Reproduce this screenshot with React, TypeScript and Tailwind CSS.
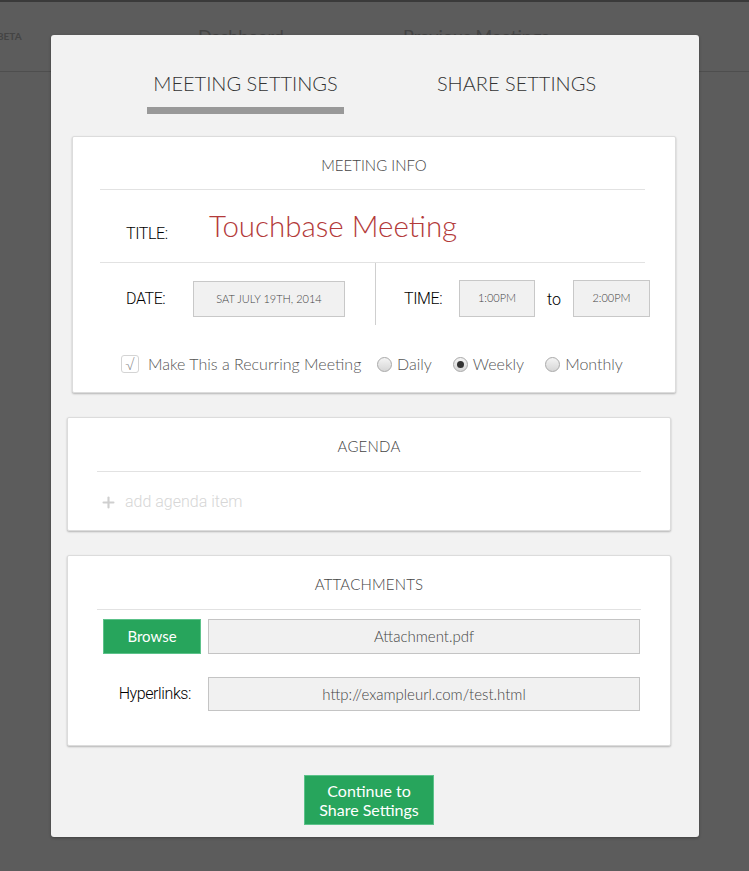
import { Plus } from 'lucide-react';

const lato = "font-['Lato',_'Noto_Sans',_sans-serif]";
const helv = "font-['Roboto',_'Liberation_Sans',_sans-serif]";

function Radio({ label, checked }: { label: string; checked?: boolean }) {
  return (
    <label className="flex items-center gap-[5px]">
      <span className="flex h-[15px] w-[15px] items-center justify-center rounded-full border border-[#a9a9a9] bg-gradient-to-b from-[#f4f4f4] to-[#d6d6d6]">
        {checked && <span className="h-[7px] w-[7px] rounded-full bg-[#333]" />}
      </span>
      <span>{label}</span>
    </label>
  );
}

function CardHeading({ title }: { title: string }) {
  return (
    <div className="flex h-[53px] items-center justify-center pt-[3px] text-[15px] font-light tracking-[0.2px] text-[#444]">
      {title}
    </div>
  );
}

export default function App() {
  return (
    <div className={`relative h-[871px] w-full overflow-hidden bg-[#5c5c5c] ${lato}`}>
      <div className="border-t-2 border-[#3a3a3a]">
        <div className="flex h-[70px] items-center border-b border-[#4e4e4e] text-[#444]">
          <span className="-ml-[3px] w-[201px] text-[10px] font-bold">BETA</span>
          <span className="w-[205px] text-[18px]">Dashboard</span>
          <span className="text-[18px]">Previous Meetings</span>
        </div>
      </div>

      <div className="absolute left-[51px] top-[35px] h-[802px] w-[648px] rounded-[3px] bg-[#f2f2f2] shadow-[0_1px_3px_rgba(0,0,0,0.3)]">
        <div className="flex gap-[74px] pl-[96px] pt-[35px]">
          <div className="flex w-[197px] flex-col items-center">
            <span className="text-[20px] font-light leading-[26px] text-[#333]">MEETING SETTINGS</span>
            <span className="mt-[11px] h-[7px] w-full bg-[#999]" />
          </div>
          <div className="flex w-[197px] flex-col items-center">
            <span className="text-[20px] font-light leading-[26px] text-[#333]">SHARE SETTINGS</span>
          </div>
        </div>

        <div className="mt-[22px] w-[620px] pl-[16px]">
          <div className="ml-[5px] h-[257px] w-[604px] rounded-[2px] border border-[#dcdcdc] bg-white shadow-[0_1px_2px_rgba(0,0,0,0.25)]">
            <div className="flex h-[52px] items-center justify-center pt-[4px] text-[15px] font-light text-[#444]">
              MEETING INFO
            </div>
            <div className="ml-[27px] mr-[30px] h-px bg-[#e2e2e2]" />
            <div className="flex h-[72px] items-center pl-[53px]">
              <span className={`w-[83px] pt-[16px] text-[16px] font-light tracking-tight text-[#000] ${helv}`}>TITLE:</span>
              <span className="text-[29.5px] font-light text-[#b33a3a]">Touchbase Meeting</span>
            </div>
            <div className="ml-[27px] mr-[30px] h-px bg-[#e2e2e2]" />
            <div className="flex h-[62px]">
              <div className="flex w-[302px] items-start pl-[53px] pt-[18px]">
                <span className={`flex h-[36px] w-[67px] items-center text-[16px] font-light tracking-tight text-[#000] ${helv}`}>DATE:</span>
                <span className="flex h-[36px] w-[152px] items-center justify-center border border-[#c8c8c8] bg-[#f1f1f1] text-[11px] font-light text-[#444]">
                  SAT JULY 19TH, 2014
                </span>
              </div>
              <div className="w-px bg-[#cfcfcf]" />
              <div className="flex items-start pl-[28px] pt-[17px]">
                <span className={`flex h-[37px] w-[55px] items-center text-[16px] font-light tracking-tight text-[#000] ${helv}`}>TIME:</span>
                <span className="flex h-[37px] w-[76px] items-center justify-center border border-[#c8c8c8] bg-[#f1f1f1] text-[11px] font-light text-[#444]">
                  1:00PM
                </span>
                <span className={`flex h-[37px] w-[38px] items-center justify-center pt-[3px] text-[16px] font-light text-[#000] ${helv}`}>to</span>
                <span className="flex h-[37px] w-[77px] items-center justify-center border border-[#c8c8c8] bg-[#f1f1f1] text-[11px] font-light text-[#444]">
                  2:00PM
                </span>
              </div>
            </div>
            <div className="mb-[18px] mt-[27px] flex h-[24px] items-center pl-[48px] text-[16px] font-light text-[#555]">
              <span className="flex h-[18px] w-[18px] items-center justify-center rounded-[3px] border border-[#d4d4d4] bg-white text-[15px] leading-none text-[#888]">
                √
              </span>
              <span className="ml-[9px] w-[229px] whitespace-nowrap">Make This a Recurring Meeting</span>
              <div className="flex gap-[21px]">
                <Radio label="Daily" />
                <Radio label="Weekly" checked />
                <Radio label="Monthly" />
              </div>
            </div>
          </div>

          <div className="mt-[24px] h-[114px] w-[604px] rounded-[2px] border border-[#dcdcdc] bg-white shadow-[0_1px_2px_rgba(0,0,0,0.25)]">
            <CardHeading title="AGENDA" />
            <div className="ml-[29px] mr-[29px] h-px bg-[#e2e2e2]" />
            <div className={`flex h-[60px] items-center pl-[32px] text-[16px] font-light text-[#d6d6d6] ${helv}`}>
              <Plus className="h-[17px] w-[17px] text-[#cfcfcf]" strokeWidth={3} />
              <span className="ml-[8px]">add agenda item</span>
            </div>
          </div>

          <div className="mt-[24px] h-[191px] w-[604px] rounded-[2px] border border-[#dcdcdc] bg-white shadow-[0_1px_2px_rgba(0,0,0,0.25)]">
            <CardHeading title="ATTACHMENTS" />
            <div className="ml-[29px] mr-[29px] h-px bg-[#e2e2e2]" />
            <div className="flex pl-[35px] pt-[9px]">
              <button className="h-[35px] w-[98px] border border-[#5cc28a] bg-[#27a55c] text-[15px] text-white">Browse</button>
              <div className="ml-[7px] flex h-[35px] w-[432px] items-center justify-center border border-[#c4c4c4] bg-[#f1f1f1] text-[15px] font-light text-[#444]">
                Attachment.pdf
              </div>
            </div>
            <div className="mt-[23px] flex items-center pl-[35px]">
              <span className={`w-[98px] pr-[10px] text-right text-[16px] font-light tracking-tight text-[#000] ${helv}`}>Hyperlinks:</span>
              <div className="ml-[7px] flex h-[34px] w-[432px] items-center justify-center border border-[#c4c4c4] bg-[#f1f1f1] text-[15px] font-light text-[#444]">
                http://exampleurl.com/test.html
              </div>
            </div>
          </div>

          <div className="mt-[29px] flex justify-center">
            <button className="h-[50px] w-[130px] border border-[#5cc28a] bg-[#27a55c] text-[16px] leading-[19px] text-white">
              Continue to
              <br />
              Share Settings
            </button>
          </div>
        </div>
      </div>
    </div>
  );
}
